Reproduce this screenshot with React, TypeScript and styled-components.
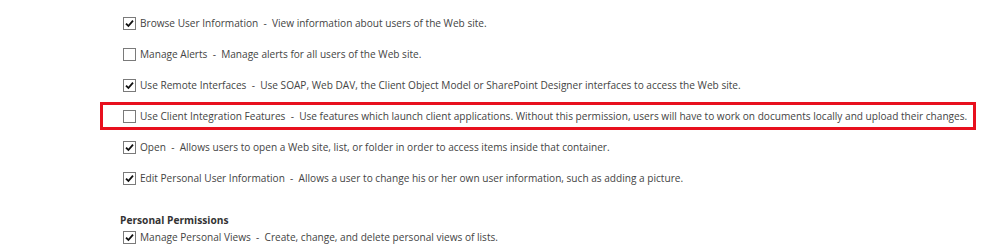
import styled, { createGlobalStyle } from 'styled-components'

const GlobalStyle = createGlobalStyle`
   html, body {
      margin: 0;
      padding: 0;
      background: #ffffff;
   }
   body {
      font-family: "Open Sans", "Liberation Sans", sans-serif;
      color: #444444;
   }
`

interface IPermission {
   name: string
   text: string
   checked: boolean
   highlight?: boolean
}

const sitePermissions: IPermission[] = [
   {name: 'Browse User Information', text: 'View information about users of the Web site.', checked: true},
   {name: 'Manage Alerts', text: 'Manage alerts for all users of the Web site.', checked: false},
   {name: 'Use Remote Interfaces', text: 'Use SOAP, Web DAV, the Client Object Model or SharePoint Designer interfaces to access the Web site.', checked: true},
   {name: 'Use Client Integration Features', text: 'Use features which launch client applications. Without this permission, users will have to work on documents locally and upload their changes.', checked: false, highlight: true},
   {name: 'Open', text: 'Allows users to open a Web site, list, or folder in order to access items inside that container.', checked: true},
   {name: 'Edit Personal User Information', text: 'Allows a user to change his or her own user information, such as adding a picture.', checked: true},
]

const personalPermissions: IPermission[] = [
   {name: 'Manage Personal Views', text: 'Create, change, and delete personal views of lists.', checked: true},
]

const CheckBox = ({checked}: {checked: boolean}) => (
   <Box>
      {checked && (
         <svg width="11" height="11" viewBox="0 0 11 11">
            <path d="M2 5.6 L4.4 8 L9 2.6" fill="none" stroke="#111" strokeWidth="1.8" />
         </svg>
      )}
   </Box>
)

const PermissionRow = ({info}: {info: IPermission}) => (
   <Row highlight={!!info.highlight}>
      <CheckBox checked={info.checked} />
      <Label>{info.name}&nbsp; - &nbsp;{info.text}</Label>
   </Row>
)

const App = () => {
   return (
      <>
         <GlobalStyle />
         <Page>
            <List>
               {sitePermissions.map((p) => <PermissionRow key={p.name} info={p} />)}
            </List>
            <Section>
               <Heading>Personal Permissions</Heading>
               {personalPermissions.map((p) => <PermissionRow key={p.name} info={p} />)}
            </Section>
         </Page>
      </>
   )
}

const Page = styled.div`
   width: 999px;
   height: 252px;
   overflow: hidden;
   padding: 9px 0 0 100px;
   box-sizing: border-box;
`

const List = styled.div`
   display: flex;
   flex-direction: column;
   gap: 3px;
`

const Row = styled.div<{highlight: boolean}>`
   display: flex;
   align-items: center;
   gap: 4px;
   width: 876px;
   height: 28px;
   box-sizing: border-box;
   padding-left: 23px;
   border: 3px solid ${({highlight}) => highlight ? '#e8101e' : 'transparent'};
`

const Box = styled.div`
   width: 11px;
   height: 11px;
   border: 1px solid #7a7a7a;
   display: flex;
   align-items: center;
   justify-content: center;
   margin-left: -3px;
   flex-shrink: 0;
`

const Label = styled.span`
   font-size: 10.1px;
   white-space: nowrap;
   color: #444444;
`

const Section = styled.div`
   margin-top: 21px;
   display: flex;
   flex-direction: column;
`

const Heading = styled.div`
   font-weight: 700;
   font-size: 10.2px;
   color: #333333;
   padding-left: 20px;
   margin-bottom: -4px;
`

export default App
